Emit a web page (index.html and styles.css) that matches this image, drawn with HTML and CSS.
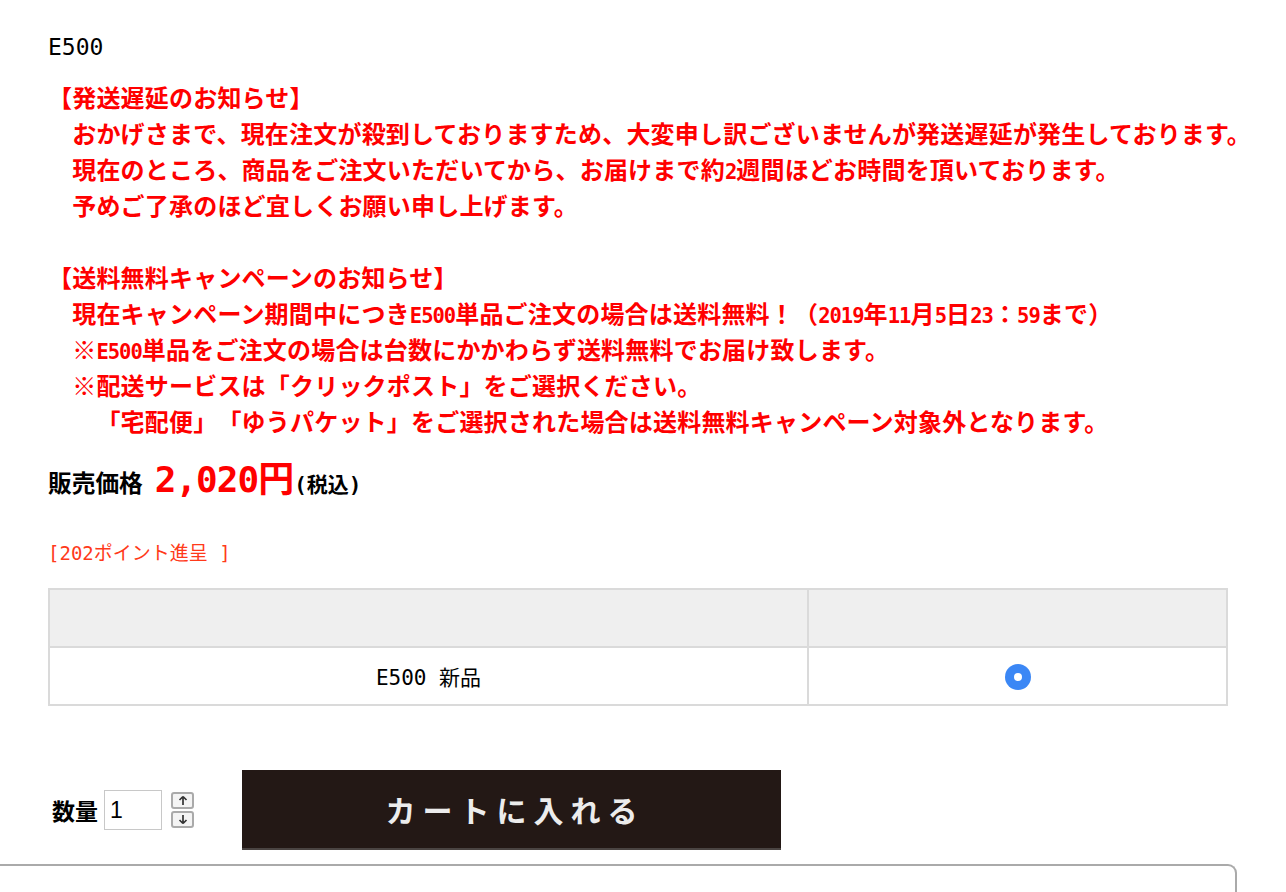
FILE: index.html
```html
<!DOCTYPE html>
<html lang="ja">
<head>
<meta charset="utf-8">
<title>E500</title>
<link rel="stylesheet" href="styles.css">
</head>
<body>
<div class="page">
  <div class="title">E500</div>

  <div class="notice">
    <div class="line">【発送遅延のお知らせ】</div>
    <div class="line">　おかげさまで、現在注文が殺到しておりますため、大変申し訳ございませんが発送遅延が発生しております。</div>
    <div class="line">　現在のところ、商品をご注文いただいてから、お届けまで約<span class="half">2</span>週間ほどお時間を頂いております。</div>
    <div class="line">　予めご了承のほど宜しくお願い申し上げます。</div>
    <div class="line blank">&nbsp;</div>
    <div class="line">【送料無料キャンペーンのお知らせ】</div>
    <div class="line">　現在キャンペーン期間中につき<span class="half">E500</span>単品ご注文の場合は送料無料！（<span class="half">2019</span>年<span class="half">11</span>月<span class="half">5</span>日<span class="half">23</span>：<span class="half">59</span>まで）</div>
    <div class="line">　※<span class="half">E500</span>単品をご注文の場合は台数にかかわらず送料無料でお届け致します。</div>
    <div class="line">　※配送サービスは「クリックポスト」をご選択ください。</div>
    <div class="line">　　「宅配便」「ゆうパケット」をご選択された場合は送料無料キャンペーン対象外となります。</div>
  </div>

  <div class="price-row">
    <span class="price-label">販売価格</span>
    <span class="price">2,020円</span><span class="tax">(税込)</span>
  </div>

  <div class="points">[202ポイント進呈 ]</div>

  <table class="variants">
    <thead>
      <tr><th class="col-name"></th><th class="col-pick"></th></tr>
    </thead>
    <tbody>
      <tr>
        <td class="col-name">E500 新品</td>
        <td class="col-pick"><span class="radio"></span></td>
      </tr>
    </tbody>
  </table>

  <div class="buy-row">
    <div class="qty">
      <span class="qty-label">数量</span>
      <span class="qty-input">1</span>
      <span class="spinner">
        <span class="spin-btn">
          <svg width="12" height="11" viewBox="0 0 12 11"><path d="M6 1.5 L2.5 5 M6 1.5 L9.5 5 M6 1.5 V10" stroke="#333" stroke-width="1.7" fill="none"/></svg>
        </span>
        <span class="spin-btn">
          <svg width="12" height="11" viewBox="0 0 12 11"><path d="M6 9.5 L2.5 6 M6 9.5 L9.5 6 M6 9.5 V1" stroke="#333" stroke-width="1.7" fill="none"/></svg>
        </span>
      </span>
    </div>
    <div class="cart-btn">カートに入れる</div>
  </div>
</div>
<div class="panel"></div>
</body>
</html>
```

FILE: styles.css
```css
html, body {
  margin: 0;
  padding: 0;
  background: #fff;
}

body {
  font-family: "Noto Sans CJK JP", "DejaVu Sans Mono", monospace;
  color: #000;
  text-spacing-trim: space-all;
}

.page {
  padding: 32px 0 0 48px;
  width: 1190px;
}

.title {
  font-family: "DejaVu Sans Mono", "Noto Sans CJK JP", monospace;
  font-size: 23px;
  line-height: 30px;
  height: 30px;
}

.notice {
  margin-top: 17px;
  color: #ff0000;
  font-weight: bold;
  font-size: 24px;
  letter-spacing: 0.2px;
  line-height: 36px;
}

.line {
  white-space: nowrap;
  height: 36px;
}

.half {
  font-family: "DejaVu Sans Mono", monospace;
  font-size: 20.5px;
  letter-spacing: -1px;
}

.price-row {
  margin-top: 19px;
  height: 44px;
  display: flex;
  align-items: baseline;
  line-height: 44px;
}

.price-label {
  font-size: 23.7px;
  font-weight: bold;
  margin-right: 12px;
}

.price {
  color: #ff0000;
  font-family: "DejaVu Sans Mono", "Noto Sans CJK JP", monospace;
  font-size: 36px;
  font-weight: bold;
  letter-spacing: -1px;
}

.tax {
  font-family: "DejaVu Sans Mono", "Noto Sans CJK JP", monospace;
  font-size: 21px;
  font-weight: bold;
  margin-left: 1px;
}

.points {
  margin-top: 39px;
  color: #ff3a1a;
  font-family: "DejaVu Sans Mono", "Noto Sans CJK JP", monospace;
  font-size: 19px;
  line-height: 24px;
  white-space: pre;
}

.variants {
  margin-top: 23px;
  width: 1180px;
  border-collapse: collapse;
  border: 2px solid #dadada;
}

.variants th,
.variants td {
  border: 2px solid #dadada;
  height: 56px;
  padding: 0;
  text-align: center;
  vertical-align: middle;
}

.variants th {
  background: #efefef;
}

.variants .col-name {
  width: 757px;
}

.variants td.col-name {
  font-family: "DejaVu Sans Mono", "Noto Sans CJK JP", monospace;
  font-size: 21px;
}

.radio {
  display: inline-block;
  width: 26px;
  height: 26px;
  border-radius: 50%;
  background: #3b87f5;
  position: relative;
  vertical-align: middle;
  margin-top: 2px;
}

.radio::after {
  content: "";
  position: absolute;
  left: 9px;
  top: 9px;
  width: 8px;
  height: 8px;
  border-radius: 50%;
  background: #fff;
}

.buy-row {
  margin-top: 64px;
  display: flex;
  align-items: center;
}

.qty {
  display: flex;
  align-items: center;
  padding-left: 4px;
}

.qty-label {
  font-size: 23px;
  font-weight: bold;
  margin-right: 6px;
}

.qty-input {
  box-sizing: border-box;
  width: 58px;
  height: 40px;
  border: 1px solid #c8c8c8;
  font-family: "Liberation Sans", sans-serif;
  font-size: 23px;
  line-height: 38px;
  padding-left: 5px;
}

.spinner {
  display: flex;
  flex-direction: column;
  gap: 2px;
  margin-left: 9px;
}

.spin-btn {
  box-sizing: border-box;
  width: 23px;
  height: 17px;
  border: 2px solid #aaa;
  border-radius: 3px;
  background: #f4f4f4;
  display: flex;
  align-items: center;
  justify-content: center;
}

.cart-btn {
  margin-left: 48px;
  box-sizing: border-box;
  width: 539px;
  height: 80px;
  background: #231815;
  border-bottom: 2px solid #4a4442;
  color: #ececec;
  font-size: 30px;
  font-weight: bold;
  letter-spacing: 7px;
  text-indent: 7px;
  display: flex;
  align-items: center;
  justify-content: center;
}

.panel {
  margin-top: 14px;
  width: 1235px;
  height: 40px;
  border-top: 2px solid #aaa;
  border-right: 2px solid #aaa;
  border-top-right-radius: 9px;
}
```
